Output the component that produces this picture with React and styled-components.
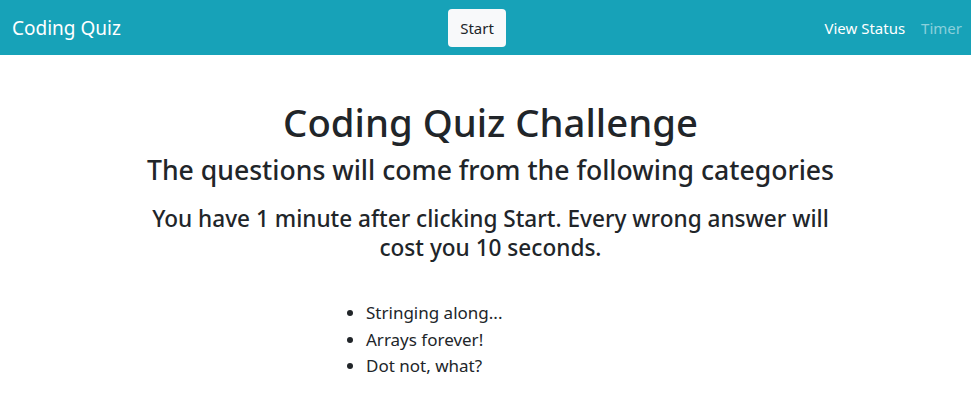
import React from 'react'
import styled, { createGlobalStyle } from 'styled-components'

const GlobalStyle = createGlobalStyle`
    body {
        margin: 0;
        font-family: "Noto Sans", "Open Sans", sans-serif;
        color: #212529;
        background: #fff;
    }
`

const categories = ['Stringing along...', 'Arrays forever!', 'Dot not, what?']

const App = () => {
    return (
        <>
            <GlobalStyle />
            <NavBar>
                <Brand>Coding Quiz</Brand>
                <StartBtn>Start</StartBtn>
                <NavLinks>
                    <NavItem>View Status</NavItem>
                    <NavItem muted>Timer</NavItem>
                </NavLinks>
            </NavBar>
            <Main>
                <Title>Coding Quiz Challenge</Title>
                <SubTitle>The questions will come from the following categories</SubTitle>
                <Rules>You have 1 minute after clicking Start. Every wrong answer will cost you 10 seconds.</Rules>
                <CategoryList>
                    {categories.map((c, i) => (
                        <li key={i}>{c}</li>
                    ))}
                </CategoryList>
            </Main>
        </>
    )
}

const NavBar = styled.nav`
    height: 55px;
    background-color: #17a2b8;
    display: grid;
    grid-template-columns: 1fr auto 1fr;
    align-items: center;
    padding: 0 9px 0 12px;
    box-sizing: border-box;
`
const Brand = styled.div`
    color: #fff;
    font-size: 19px;
`
const StartBtn = styled.button`
    width: 58px;
    height: 38px;
    margin-right: 20px;
    background: #f8f9fa;
    border: none;
    border-radius: 4px;
    font-family: inherit;
    font-size: 15px;
    color: #212529;
`
const NavLinks = styled.div`
    display: flex;
    justify-content: flex-end;
    gap: 16px;
`
const NavItem = styled.span`
    color: ${(p) => (p.muted ? 'rgba(255,255,255,0.5)' : '#fff')};
    font-size: 15px;
`
const Main = styled.main`
    display: flex;
    flex-direction: column;
    align-items: center;
    text-align: center;
    padding: 43px 0 0 10px;
`
const Title = styled.h1`
    margin: 0;
    font-size: 38.3px;
    font-weight: 500;
    line-height: 48px;
`
const SubTitle = styled.h2`
    margin: 7px 0 0;
    font-size: 26.6px;
    font-weight: 500;
    line-height: 34px;
`
const Rules = styled.h3`
    margin: 17px 0 0;
    max-width: 700px;
    font-size: 22.6px;
    font-weight: 500;
    line-height: 29px;
`
const CategoryList = styled.ul`
    align-self: flex-start;
    margin: 38px 0 0 316px;
    padding-left: 40px;
    text-align: left;
    font-size: 17px;
    line-height: 26.5px;
`

export default App
